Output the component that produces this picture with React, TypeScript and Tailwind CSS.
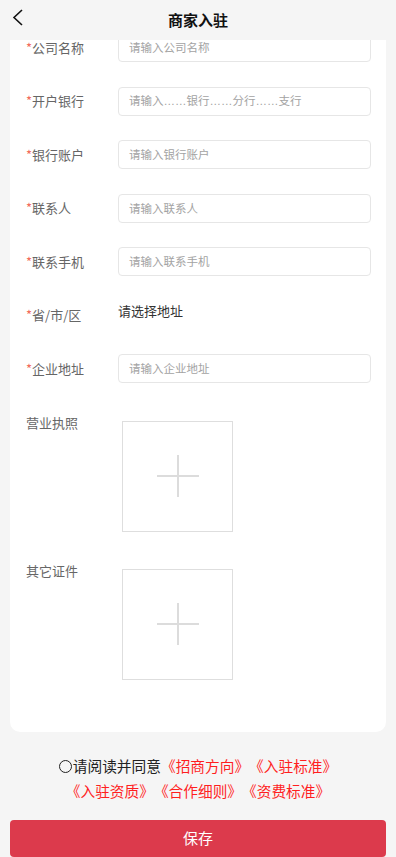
import React from "react";

const font = { fontFamily: '"Noto Sans CJK SC", "Noto Sans", sans-serif' };
const latin = { fontFamily: '"Liberation Sans", sans-serif' };

function Row({ label, placeholder, value }: { label: string; placeholder?: React.ReactNode; value?: string }) {
  return (
    <div className="flex items-center h-[53.5px] pl-[16px] pr-[15px]">
      <div className="w-[92px] shrink-0 text-[13px] text-[#666] leading-[18px]">
        <span className="text-[#f26b5b]">*</span>
        {label}
      </div>
      {value ? (
        <div className="flex-1 text-[13px] text-[#333] leading-[18px] pb-[8px]">{value}</div>
      ) : (
        <div className="flex-1 h-[29px] border border-[#e6e6e6] rounded-[4px] flex items-center px-[10px] text-[11.5px] text-[#a3a3a3] whitespace-pre">
          {placeholder}
        </div>
      )}
    </div>
  );
}

function Upload({ label, className }: { label: string; className?: string }) {
  return (
    <div className={"flex items-start pl-[16px] " + (className ?? "")}>
      <div className="w-[96px] shrink-0 text-[13px] text-[#666] leading-[18px]">{label}</div>
      <div className="mt-[7px] w-[111px] h-[111px] border border-[#dedede] flex items-center justify-center">
        <svg width="42" height="42" viewBox="0 0 42 42">
          <line x1="0" y1="21" x2="42" y2="21" stroke="#dcdcdc" strokeWidth="2" />
          <line x1="21" y1="0" x2="21" y2="42" stroke="#dcdcdc" strokeWidth="2" />
        </svg>
      </div>
    </div>
  );
}

export default function App() {
  const dots = <span style={latin}>……</span>;
  return (
    <div className="w-[396px] h-[857px] overflow-hidden bg-[#f5f5f5] flex flex-col" style={font}>
      <div className="relative z-10 h-[40px] shrink-0 bg-[#f5f5f5] flex items-center justify-center">
        <svg className="absolute left-[12px] top-[9px]" width="12" height="17" viewBox="0 0 12 17">
          <polyline points="10,1 2,8.5 10,16" fill="none" stroke="#111" strokeWidth="1.6" />
        </svg>
        <div className="text-[15px] font-bold text-[#111]">商家入驻</div>
      </div>
      <div className="-mt-[19px] mx-[10px] bg-white rounded-b-[10px] pb-[52px]">
        <Row label="公司名称" placeholder="请输入公司名称" />
        <Row
          label="开户银行"
          placeholder={
            <span>
              请输入{dots}银行{dots}分行{dots}支行
            </span>
          }
        />
        <Row label="银行账户" placeholder="请输入银行账户" />
        <Row label="联系人" placeholder="请输入联系人" />
        <Row label="联系手机" placeholder="请输入联系手机" />
        <Row label="省/市/区" value="请选择地址" />
        <Row label="企业地址" placeholder="请输入企业地址" />
        <Upload label="营业执照" className="mt-[18px]" />
        <Upload label="其它证件" className="mt-[30px]" />
      </div>
      <div className="mt-[21px] text-center text-[14.7px] leading-[25px] [text-spacing-trim:space-all]">
        <div>
          <span className="inline-block w-[13px] h-[13px] border-[1.5px] border-[#222] rounded-full align-[-1px] mr-[1px]"></span>
          <span className="text-[#222]">请阅读并同意</span>
          <span className="text-[#ff1f1f]">《招商方向》《入驻标准》</span>
        </div>
        <div className="text-[#ff1f1f]">《入驻资质》《合作细则》《资费标准》</div>
      </div>
      <div className="mt-[17px] mx-[10px] h-[37px] shrink-0 bg-[#dc3a4c] rounded-[4px] flex items-center justify-center text-white text-[15px]">
        保存
      </div>
    </div>
  );
}
